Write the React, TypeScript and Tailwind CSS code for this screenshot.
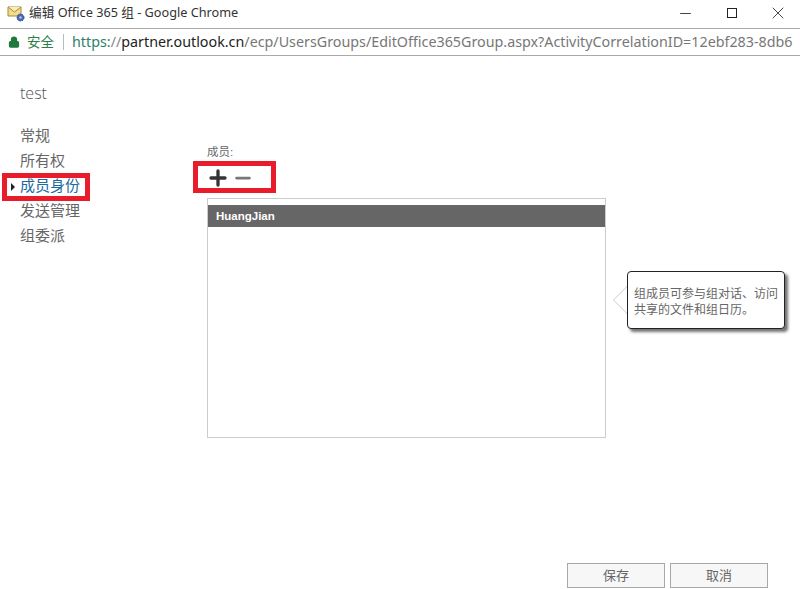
import { Lock, Minus, Plus, X } from 'lucide-react';

const CJK = "font-['Liberation_Sans','Noto_Sans_CJK_SC',sans-serif]";

const navItems = ['常规', '所有权', '成员身份', '发送管理', '组委派'];

function MailIcon() {
  return (
    <svg width="18" height="18" viewBox="0 0 18 18" className="shrink-0">
      <path d="M1 3h13v9H1z" fill="#f3dc8c" stroke="#a68a3c" strokeWidth="1" />
      <path d="M1 3l6.5 5L14 3" fill="#fbeeb8" stroke="#a68a3c" strokeWidth="1" />
      <circle cx="13.5" cy="13.5" r="3.5" fill="#4a68b5" stroke="#2f4a8f" strokeWidth="1" strokeDasharray="1.5 1" />
      <circle cx="13.5" cy="13.5" r="1.2" fill="#b9c8ea" />
    </svg>
  );
}

function NavItem({ label }: { label: string }) {
  const active = label === '成员身份';
  if (active) {
    return (
      <div className="-my-[1.5px] ml-[2px] flex h-[28px] w-[88px] items-center border-[5px] border-[#e81c2b] text-[#1c6a9e]">
        <span className="ml-[4px] mr-[5px] h-0 w-0 border-y-[4px] border-l-[4px] border-y-transparent border-l-[#222]" />
        <span className="whitespace-nowrap">{label}</span>
      </div>
    );
  }
  return <div className="flex h-[25px] items-center pl-[20px]">{label}</div>;
}

export default function App() {
  return (
    <div className={`${CJK} relative flex h-[589px] w-[800px] flex-col overflow-hidden bg-white text-[#666]`}>
      {/* Window title bar */}
      <div className="flex h-[29px] shrink-0 items-center border-b border-[#aaa] pb-[2px] pl-[7px] text-[12.7px] text-[#333]">
        <MailIcon />
        <span className="ml-[4px] flex-1 font-['Noto_Sans','Noto_Sans_CJK_SC',sans-serif]">编辑 Office 365 组 - Google Chrome</span>
        <Minus size={17} strokeWidth={1.2} className="mr-[33px] text-[#222]" />
        <div className="mr-[31px] h-[10px] w-[10px] border border-[#222]" />
        <X size={20} strokeWidth={1} className="mr-[12px] text-[#222]" />
      </div>

      {/* Address bar */}
      <div className="flex h-[27px] shrink-0 items-center border-b border-[#aaa] pl-[8px] font-['Noto_Sans','Noto_Sans_CJK_SC',sans-serif] text-[14.3px] whitespace-nowrap">
        <Lock size={12} strokeWidth={2.5} className="shrink-0 fill-[#1f7a3d] text-[#1f7a3d]" />
        <span className="ml-[7px] shrink-0 text-[13.5px] text-[#2f7f4a]">安全</span>
        <span className="ml-[9px] mr-[8px] h-[16px] w-px shrink-0 bg-[#bbb]" />
        <span className="text-[#2f7f6a]">https:</span>
        <span className="text-[#888]">//</span>
        <span className="text-[#222]">partner.outlook.cn</span>
        <span className="text-[#777]">/ecp/UsersGroups/EditOffice365Group.aspx?ActivityCorrelationID=12ebf283-8db6</span>
      </div>

      <div className="flex flex-1">
        {/* Left nav */}
        <div className="w-[193px] shrink-0 pt-[26px] text-[15px]">
          <div className="mb-[20px] pl-[20px] font-['Open_Sans',sans-serif] text-[16px] leading-[22px] font-light text-[#555]">test</div>
          <nav className="flex flex-col">
            {navItems.map((item) => (
              <NavItem key={item} label={item} />
            ))}
          </nav>
        </div>

        {/* Members column */}
        <div className="flex flex-1 flex-col">
          <div className="ml-[14px] mt-[89px] h-[16px] text-[11.5px] leading-[14px] text-[#666]">成员:</div>
          <div className="flex h-[32px] w-[83px] items-center border-[5px] border-[#e81c2b] pl-[8px] pt-[1px]">
            <Plus size={24} strokeWidth={3.3} className="shrink-0 text-[#333]" />
            <Minus size={22} strokeWidth={3} className="ml-[2px] shrink-0 text-[#777]" />
          </div>
          <div className="ml-[14px] mt-[5px] h-[240px] w-[399px] border border-[#ccc] pt-[6px]">
            <div className="flex h-[22px] items-center bg-[#666] pl-[8px] pt-[1px] text-[11.5px] font-bold text-white">HuangJian</div>
          </div>
          <div className="mr-[32px] mt-[125px] flex justify-end gap-[5px]">
            <button className="h-[25px] w-[98px] border border-[#a5a9a9] bg-[#f7f7f7] text-[13px] text-[#666]">保存</button>
            <button className="h-[25px] w-[98px] border border-[#a5a9a9] bg-[#f7f7f7] text-[13px] text-[#666]">取消</button>
          </div>
        </div>
      </div>

      {/* Help callout */}
      <div className="absolute left-[627px] top-[271px] h-[58px] w-[158px] whitespace-nowrap rounded-[4px] border border-[#222] bg-white pl-[6px] pt-[14px] text-[12px] leading-[16px] text-[#666] shadow-[3px_3px_3px_rgba(0,0,0,0.55)]">
        <div className="absolute -left-[15px] top-[14px] h-0 w-0 border-y-[14px] border-r-[14px] border-y-transparent border-r-[#ccc]" />
        <div className="absolute -left-[14px] top-[15px] h-0 w-0 border-y-[13px] border-r-[13px] border-y-transparent border-r-white" />
        组成员可参与组对话、访问
        <br />
        共享的文件和组日历。
      </div>
    </div>
  );
}
